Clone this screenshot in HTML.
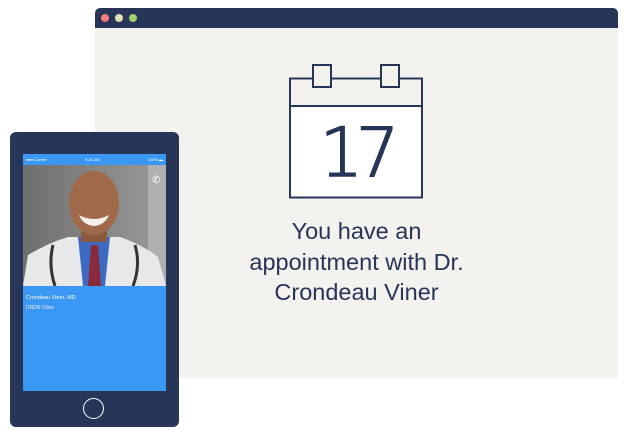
<!DOCTYPE html>
<html><head><style>
*{margin:0;padding:0;box-sizing:border-box}
body{width:629px;height:436px;background:#fff;position:relative;overflow:hidden;font-family:"Liberation Sans",sans-serif}
.win{position:absolute;left:95px;top:8px;width:523px;height:370px;background:#f3f2ef;border-radius:5px 5px 0 0;overflow:hidden}
.bar{height:20px;background:#263558;position:relative}
.dot{position:absolute;top:6px;width:8px;height:8px;border-radius:50%}
.txt{position:absolute;left:95px;width:523px;top:216px;text-align:center;color:#263558;font-size:23.5px;line-height:30.5px}
.phone{position:absolute;left:10px;top:132px;width:169px;height:295px;background:#263558;border-radius:6px}
.scr{position:absolute;left:13px;top:22px;width:143px;height:237px;background:#3a97f3;overflow:hidden}
</style></head><body>
<div class="win"><div class="bar">
<div class="dot" style="left:6px;background:#f37b7b"></div>
<div class="dot" style="left:20px;background:#e3dfb6"></div>
<div class="dot" style="left:34px;background:#9ed06a"></div>
</div></div>
<svg style="position:absolute;left:0;top:0" width="629" height="436">
<rect x="290" y="107" width="132" height="90" fill="#fff"/>
<rect x="290" y="78.5" width="132" height="119" fill="none" stroke="#263558" stroke-width="2"/>
<line x1="290" y1="106" x2="422" y2="106" stroke="#263558" stroke-width="2"/>
<rect x="313" y="65" width="18" height="22" fill="#f3f2ef" stroke="#263558" stroke-width="2"/>
<rect x="381" y="65" width="18" height="22" fill="#f3f2ef" stroke="#263558" stroke-width="2"/>
<text x="356" y="176" text-anchor="middle" font-family="DejaVu Sans" font-weight="200" font-size="68" letter-spacing="-7" fill="#263558" stroke="#263558" stroke-width="1.6">17</text>
</svg>
<div class="txt">You have an<br>appointment with Dr.<br>Crondeau Viner</div>
<div class="phone">
<div class="scr">
<div style="height:11px;background:#3a97f3;color:#fff;font-size:4px;line-height:11px;padding:0 3px">●●● Carrier<span style="position:absolute;left:62px">9:21 AM</span><span style="position:absolute;right:3px">100% ▬</span></div>
<svg width="143" height="121" style="display:block">
<defs><linearGradient id="g" x1="0" x2="1"><stop offset="0" stop-color="#6f6f6f"/><stop offset="1" stop-color="#9a9a9a"/></linearGradient></defs>
<rect width="143" height="121" fill="url(#g)"/>
<rect x="125" y="0" width="18" height="121" fill="#b0b0b0"/>
<path d="M0 121 L5 90 Q25 78 45 72 L97 72 Q120 80 135 92 L143 121Z" fill="#e8e8ea"/>
<path d="M55 72 L87 72 L82 121 L60 121Z" fill="#3d6bc4"/>
<path d="M68 80 L75 80 L78 121 L65 121Z" fill="#8a2a3a"/>
<rect x="58" y="55" width="26" height="22" fill="#8a5a3e"/>
<ellipse cx="71" cy="38" rx="25" ry="32" fill="#a06a4a"/>
<path d="M56 50 Q71 58 86 50 Q82 60 71 61 Q60 60 56 50Z" fill="#fff" opacity=".9"/>
<path d="M30 80 Q25 100 32 121 M112 80 Q118 100 110 121" stroke="#333" stroke-width="3" fill="none"/>
<text x="129" y="18" font-size="10" fill="#fff">✆</text>
</svg>
<div style="color:#fff;font-size:5.5px;padding:9px 3px 0">Crondeau Viner, MD</div>
<div style="color:#e8f2ff;font-size:5px;padding:4px 3px 0">DRDR Clinic</div>
</div>
<div style="position:absolute;left:73px;top:266px;width:21px;height:21px;border:1.5px solid #fff;border-radius:50%"></div>
</div>
</body></html>
